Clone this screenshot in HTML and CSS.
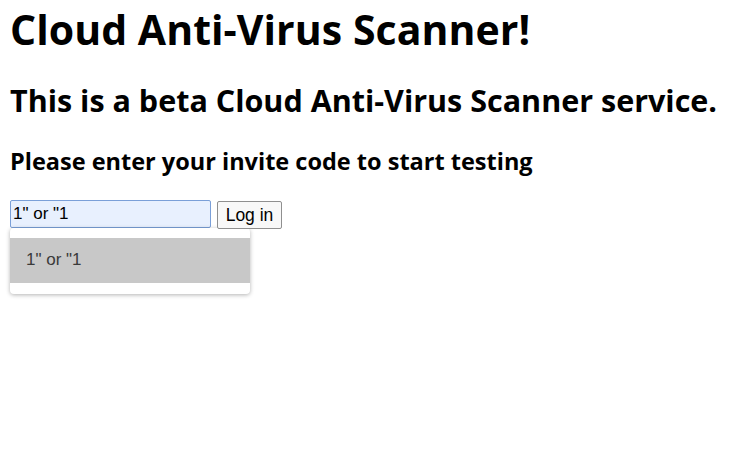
FILE: index.html
```html
<!DOCTYPE html>
<html>
<head>
<meta charset="utf-8">
<title>Cloud Anti-Virus Scanner</title>
<link rel="stylesheet" href="styles.css">
</head>
<body>
<h1 class="title">Cloud Anti-Virus Scanner!</h1>
<h2 class="subtitle">This is a beta Cloud Anti-Virus Scanner service.</h2>
<h3 class="prompt">Please enter your invite code to start testing</h3>
<form class="login" onsubmit="return false">
  <div class="field">
    <input class="code" type="text" value='1" or "1'>
    <div class="suggest">
      <div class="suggest-item">1" or "1</div>
    </div>
  </div>
  <button class="submit" type="submit">Log in</button>
</form>
</body>
</html>
```
FILE: styles.css
```css
html, body {
  margin: 0;
  padding: 0;
  background: #fff;
}
html {
  min-height: 100%;
}
body {
  min-height: 452px;
  box-sizing: border-box;
  padding: 0 10px 40px;
  font-family: "Open Sans", "Noto Sans", sans-serif;
  color: #000;
}
.title, .subtitle, .prompt {
  font-weight: 700;
  margin: 0;
  white-space: nowrap;
}
.title {
  font-size: 41px;
  line-height: 40px;
  letter-spacing: 0.05px;
  padding-top: 9px;
}
.subtitle {
  font-size: 30.5px;
  line-height: 30px;
  margin-top: 36px;
}
.prompt {
  font-size: 23.5px;
  line-height: 24px;
  margin-top: 34px;
}
.login {
  display: flex;
  align-items: flex-start;
  gap: 6px;
  margin-top: 27px;
}
.field {
  display: flex;
  flex-direction: column;
  align-items: flex-start;
  width: 201px;
  flex: none;
}
.code {
  box-sizing: border-box;
  width: 201px;
  height: 28px;
  margin: 0;
  padding: 0 2px;
  border: 1px solid #7a9fd8;
  border-radius: 2px;
  background: #e8f0fe;
  font-family: "Liberation Sans", Arial, sans-serif;
  font-size: 17px;
  color: #000;
  outline: none;
}
.suggest {
  box-sizing: border-box;
  width: 240px;
  flex: none;
  padding: 10px 0 11px;
  background: #fff;
  border-radius: 4px;
  box-shadow: 0 1px 4px rgba(0,0,0,0.3);
}
.suggest-item {
  height: 45px;
  line-height: 44px;
  padding-left: 16px;
  background: #c8c8c8;
  font-family: "Liberation Sans", Arial, sans-serif;
  font-size: 17px;
  color: #3a3a3a;
}
.submit {
  box-sizing: border-box;
  height: 28px;
  width: 65px;
  margin-top: 1px;
  padding: 0;
  border: 1px solid #8f8f8f;
  border-radius: 2px;
  background: #f8f8f8;
  font-family: "Liberation Sans", Arial, sans-serif;
  font-size: 17.5px;
  color: #000;
}
```
